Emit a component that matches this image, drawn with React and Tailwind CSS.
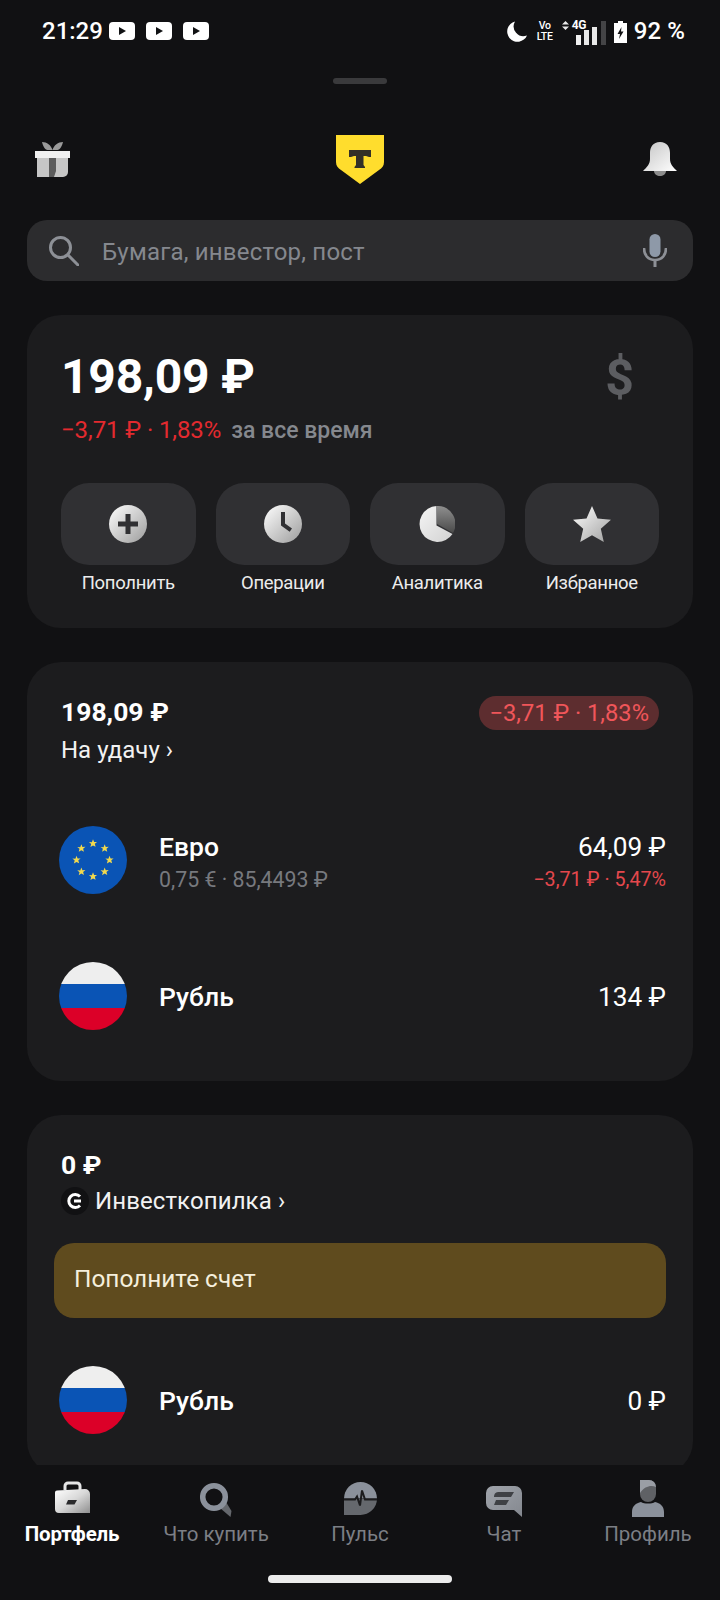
import React from "react";

const Gray = ({ id, a = "#ffffff", b = "#a8a8a8" }) => (
  <defs>
    <linearGradient id={id} x1="0" y1="0" x2="1" y2="1">
      <stop offset="0" stopColor={a} />
      <stop offset="1" stopColor={b} />
    </linearGradient>
  </defs>
);

const Yt = () => (
  <svg width="26" height="18" viewBox="0 0 26 18">
    <rect width="26" height="18" rx="4" fill="#fff" />
    <path d="M10 5l7 4-7 4z" fill="#111214" />
  </svg>
);

const Flag = () => (
  <div className="w-[68px] h-[68px] rounded-full overflow-hidden flex flex-col shrink-0">
    <div className="h-[22px] bg-[#eeeeee]" />
    <div className="h-[24px] bg-[#0a54b5]" />
    <div className="h-[22px] bg-[#dc0028]" />
  </div>
);

const EuFlag = () => {
  const stars = Array.from({ length: 8 }, (_, i) => {
    const a = (i * Math.PI * 2) / 8;
    return [34 + Math.sin(a) * 16.5, 34 - Math.cos(a) * 16.5];
  });
  return (
    <svg width="68" height="68" viewBox="0 0 68 68" className="shrink-0">
      <circle cx="34" cy="34" r="34" fill="#0a54b5" />
      {stars.map(([x, y], i) => (
        <path
          key={i}
          transform={`translate(${x} ${y})`}
          d="M0-4.2l1.1 2.8 3-.2-2.3 1.9.8 3L0 1.9l-2.6 1.6.8-3-2.3-1.9 3 .2z"
          fill="#f2d94e"
        />
      ))}
    </svg>
  );
};

const Action = ({ label, children }) => (
  <div className="flex-1 flex flex-col items-center">
    <div className="w-full h-[82px] rounded-[28px] bg-[#303033] flex items-center justify-center">{children}</div>
    <div className="mt-[8px] text-[18.5px] leading-[21px] text-[#ececec] tracking-[-0.3px]">{label}</div>
  </div>
);

const NavItem = ({ label, active, children }) => (
  <div className="w-[144px] flex flex-col items-center">
    <div className="h-[37px] flex items-end justify-center">{children}</div>
    <div className={`mt-[5px] text-[20.5px] leading-[24px] ${active ? "font-bold text-white tracking-[-0.2px]" : "text-[#7c7f85]"}`}>{label}</div>
  </div>
);

const Row = ({ flag, name, sub, value, delta, className }) => (
  <div className={`flex items-center ${className}`}>
    {flag}
    <div className={`ml-[32px] flex-1 ${sub ? "pt-[6px]" : "pt-[2px]"}`}>
      <div className="text-[26.5px] leading-[30px] font-medium text-white">{name}</div>
      {sub && <div className="mt-[3px] text-[21.3px] leading-[29px] text-[#77797e]">{sub}</div>}
    </div>
    <div className={`text-right ${sub ? "pt-[6px]" : "pt-[2px]"}`}>
      <div className="text-[26.2px] leading-[30px] text-white">{value}</div>
      {delta && <div className="mt-[3px] text-[19.7px] leading-[29px] text-[#e5484d]">{delta}</div>}
    </div>
  </div>
);

export default function App() {
  return (
    <div className="w-[720px] h-[1600px] overflow-hidden flex flex-col bg-[#111113] font-['Roboto','Noto_Sans',sans-serif] text-white">
      <div className="flex-1 min-h-0 overflow-hidden">
        {/* status bar */}
        <div className="h-[62px] pl-[42px] pr-[35px] flex items-center">
          <span className="text-[24px] leading-[24px] font-medium">21:29</span>
          <div className="ml-[6px] flex gap-[11px]"><Yt /><Yt /><Yt /></div>
          <div className="ml-auto flex items-center">
            <svg width="20" height="21" viewBox="0 0 20 21"><path d="M8 .5A10.300 10.300 0 1 0 20 14.500 9.800 9.800 0 0 1 8 .5z" fill="#fff" /></svg>
            <div className="ml-[11px] w-[14px] flex flex-col items-center text-[10.5px] leading-[11px] font-medium tracking-[-0.3px]"><span>Vo</span><span>LTE</span></div>
            <div className="relative ml-[10px] w-[44px] h-[25px] mt-[2px]">
              <svg className="absolute left-0 top-0" width="44" height="25" viewBox="0 0 44 25">
                <path d="M3.500 1l3.500 3.500H0zM3.500 10L0 6.500h7z" fill="#e8e8e8" />
                <rect x="14" y="15" width="5" height="10" fill="#f0f0f0" />
                <rect x="22" y="10" width="5" height="15" fill="#e8e8e8" />
                <rect x="30" y="7" width="5" height="18" fill="#e8e8e8" />
                <rect x="39" y="1" width="5" height="24" fill="#444446" />
              </svg>
              <span className="absolute left-[10px] -top-[1px] text-[12px] leading-[12px] font-bold tracking-[-0.4px]">4G</span>
            </div>
            <svg className="ml-[8px] mt-[1px]" width="13" height="22" viewBox="0 0 13 22">
              <path d="M4 0h5v2h4v20H0V2h4z" fill="#fff" />
              <path d="M7.500 6L3.500 13h2.500L5 18l4.500-7.500H7z" fill="#111113" />
            </svg>
            <span className="ml-[7px] text-[24px] leading-[24px] font-medium tracking-[0.1px]">92 %</span>
          </div>
        </div>
        {/* handle */}
        <div className="mt-[16px] mx-auto w-[54px] h-[6px] rounded-full bg-[#3a3a3c]" />
        {/* header */}
        <div className="mt-[51px] h-[48px] pl-[35px] pr-[43px] flex items-center">
          <svg width="35" height="35" viewBox="0 0 35 35">
            <path d="M7 0c5 0 9 3 10.500 8h-5C10 8 8 4 7 0zM28 0c-5 0-9 3-10.500 8h5C25 8 27 4 28 0z" fill="#9a9a9a" />
            <rect x="0" y="9" width="35" height="7" fill="#f0f0f0" />
            <path d="M2 16h31v14a5 5 0 0 1-5 5H2z" fill="#c6c6c6" />
            <path d="M14 16h7v13l-2 6h-5z" fill="#5c5c5c" />
          </svg>
          <svg className="ml-[266px]" width="48" height="49" viewBox="0 0 48 49">
            <path d="M0 0h48v27c0 4-2 6-5 8L24 49 5 35c-3-2-5-4-5-8z" fill="#ffdd2d" />
            <path d="M13 15h22v7h-2l-3-1h-2.500v9l1.500 2v1h-10.500v-1l1.500-2v-9H18l-3 1h-2z" fill="#333027" />
          </svg>
          <svg className="ml-auto" width="34" height="34" viewBox="0 0 34 34">
            <defs>
              <linearGradient id="bell" x1="0" y1="0" x2="1" y2="1">
                <stop offset="0" stopColor="#c4c4c4" />
                <stop offset="1" stopColor="#ffffff" />
              </linearGradient>
            </defs>
            <path d="M17 0c7 0 10 5 10 11v6c0 5 3 8 7 12H0c4-4 7-7 7-12v-6C7 5 10 0 17 0z" fill="url(#bell)" />
            <path d="M11 29h12c0 3-3 5-6 5s-6-2-6-5z" fill="#8d8d8d" />
          </svg>
        </div>
        {/* search */}
        <div className="mt-[37px] mx-[27px] h-[61px] rounded-[20px] bg-[#2c2c2e] flex items-center pl-[22px] pr-[26px]">
          <svg width="30" height="30" viewBox="0 0 30 30" fill="none" stroke="#8d9096" strokeWidth="3">
            <circle cx="11.500" cy="11.500" r="10" />
            <path d="M19 19l10 10" strokeLinecap="round" />
          </svg>
          <span className="ml-[23px] pt-[2px] text-[24px] leading-[30px] text-[#85888e] tracking-[0.2px]">Бумага, инвестор, пост</span>
          <svg className="ml-auto" width="24" height="33" viewBox="0 0 24 33">
            <rect x="6.500" y="0" width="11" height="23" rx="5.500" fill="#8e99a8" />
            <path d="M1 14c0 7 4 12 11 12s11-5 11-12" fill="none" stroke="#8d9096" strokeWidth="2.600" />
            <rect x="10.500" y="25" width="3" height="8" fill="#8d9096" />
          </svg>
        </div>
        {/* total card */}
        <div className="mt-[34px] mx-[27px] h-[313px] rounded-[34px] bg-[#1c1c1e] pt-[32px] px-[34px]">
          <div className="flex items-center justify-between pr-[25px]">
            <div className="text-[48px] leading-[58px] font-bold tracking-[-0.2px]">198,09 ₽</div>
            <div className="mt-[2px] text-[50px] leading-[58px] font-bold text-[#5c5d61]">$</div>
          </div>
          <div className="mt-[9px] flex items-baseline leading-[28px]">
            <span className="text-[24px] text-[#e32a2f] tracking-[-0.1px]">−3,71 ₽ · 1,83%</span>
            <span className="ml-[10px] text-[23px] text-[#85888e] font-medium">за все время</span>
          </div>
          <div className="mt-[38px] flex gap-[20px]">
            <Action label="Пополнить">
              <svg width="38" height="38" viewBox="0 0 38 38">
                <Gray id="g1" a="#ffffff" b="#9c9c9c" />
                <circle cx="19" cy="19" r="19" fill="url(#g1)" />
                <path d="M16.500 9h5v7.500H29v5h-7.500V29h-5v-7.500H9v-5h7.500z" fill="#303033" />
              </svg>
            </Action>
            <Action label="Операции">
              <svg width="38" height="38" viewBox="0 0 38 38">
                <Gray id="g2" a="#ffffff" b="#9c9c9c" />
                <circle cx="19" cy="19" r="19" fill="url(#g2)" />
                <path d="M17 7h4v11.500l7 5-2.300 3.200-8.700-6.200z" fill="#303033" />
              </svg>
            </Action>
            <Action label="Аналитика">
              <svg width="36" height="36" viewBox="0 0 36 36">
                <defs>
                  <linearGradient id="g3b" x1="0" y1="0" x2="0" y2="1">
                    <stop offset="0" stopColor="#8f8f8f" />
                    <stop offset="1" stopColor="#4a4a4a" />
                  </linearGradient>
                </defs>
                <Gray id="g3" a="#f5f5f5" b="#d2d2d2" />
                <path d="M18 0a18 18 0 0 1 16 27L18 18z" fill="url(#g3b)" />
                <path d="M17.500 0v19.500l16 8.500A18 18 0 1 1 17.500 0z" fill="url(#g3)" />
              </svg>
            </Action>
            <Action label="Избранное">
              <svg width="38" height="36" viewBox="0 0 38 36">
                <Gray id="g4" a="#ffffff" b="#a0a0a0" />
                <path d="M19 0l5.500 12.400L38 13.700l-10.200 9L30.800 36 19 29.200 7.200 36l3-13.300-10.200-9 13.500-1.300z" fill="url(#g4)" />
              </svg>
            </Action>
          </div>
        </div>
        {/* account card */}
        <div className="mt-[34px] mx-[27px] h-[419px] rounded-[34px] bg-[#1c1c1e] pt-[33px] pl-[34px] pr-[27px]">
          <div className="flex items-start justify-between">
            <div>
              <div className="text-[26.5px] leading-[34px] font-bold">198,09 ₽</div>
              <div className="mt-[5px] text-[24px] leading-[32px] text-[#f2f2f2]">На удачу ›</div>
            </div>
            <div className="mr-[7px] mt-[1px] h-[34px] px-[10px] rounded-full bg-[#5d2d2f] flex items-center text-[23.7px] leading-[34px] text-[#f0565a]">−3,71 ₽ · 1,83%</div>
          </div>
          <Row className="mt-[60px] -ml-[2px]" flag={<EuFlag />} name="Евро" sub="0,75 € · 85,4493 ₽" value="64,09 ₽" delta="−3,71 ₽ · 5,47%" />
          <Row className="mt-[68px] -ml-[2px]" flag={<Flag />} name="Рубль" value="134 ₽" />
        </div>
        {/* piggy card */}
        <div className="mt-[34px] mx-[27px] h-[360px] rounded-[34px] bg-[#1c1c1e] pt-[33px] pl-[34px] pr-[27px]">
          <div className="text-[26.5px] leading-[34px] font-bold">0 ₽</div>
          <div className="mt-[3px] flex items-center">
            <svg width="28" height="28" viewBox="0 0 28 28">
              <circle cx="14" cy="14" r="14" fill="#111113" />
              <path d="M19 9.500A6.500 6.500 0 1 0 19 18.500" fill="none" stroke="#fff" strokeWidth="3" />
              <path d="M13 14h7" stroke="#fff" strokeWidth="3" />
            </svg>
            <span className="ml-[6px] text-[24px] leading-[32px] text-[#f2f2f2] tracking-[0.1px]">Инвесткопилка ›</span>
          </div>
          <div className="mt-[26px] -ml-[7px] h-[75px] rounded-[20px] bg-[#5f4b1e] flex items-center pl-[20px] pb-[2px] text-[24.4px] text-[#f5efdc]">Пополните счет</div>
          <Row className="mt-[48px] -ml-[2px]" flag={<Flag />} name="Рубль" value="0 ₽" />
        </div>
      </div>
      {/* bottom nav */}
      <div className="h-[135px] shrink-0 bg-[#111113] flex flex-col">
        <div className="mt-[15px] flex">
          <NavItem label="Портфель" active>
            <svg width="35" height="37" viewBox="0 0 35 37">
              <defs>
                <linearGradient id="n1" x1="0" y1="0" x2="1" y2="1">
                  <stop offset="0" stopColor="#ffffff" />
                  <stop offset="0.5" stopColor="#d8d8d8" />
                  <stop offset="1" stopColor="#8f8f8f" />
                </linearGradient>
              </defs>
              <path d="M10 10V6a3 3 0 0 1 3-3h9a3 3 0 0 1 3 3v4" fill="none" stroke="#e6e6e6" strokeWidth="3" />
              <path d="M2 10.500L30 9a5 5 0 0 1 5 5v19H4a4 4 0 0 1-4-4V12.500a2 2 0 0 1 2-2z" fill="url(#n1)" />
              <path d="M13 20h9l-2.500 4.500H11z" fill="#2a2a2c" />
            </svg>
          </NavItem>
          <NavItem label="Что купить">
            <svg width="32" height="37" viewBox="0 0 32 37">
              <path d="M20 28l6-6 5.500 9-1 6z" fill="#65686d" />
              <circle cx="14" cy="17" r="11.300" fill="none" stroke="#8b919b" strokeWidth="5.500" />
            </svg>
          </NavItem>
          <NavItem label="Пульс">
            <svg width="33" height="37" viewBox="0 0 33 37">
              <path d="M0 18.500A16.500 16.500 0 0 1 33 18.500z" fill="#8b919b" />
              <path d="M0 19h33A16.500 16.500 0 0 1 16.500 35H0z" fill="#65686d" />
              <path d="M0 19.500h11l2-3 3 9 2-15 3 9h12" fill="none" stroke="#1c1c1e" strokeWidth="2" />
            </svg>
          </NavItem>
          <NavItem label="Чат">
            <svg width="36" height="37" viewBox="0 0 36 37">
              <Gray id="n4" a="#a0a4ab" b="#84888f" />
              <path d="M7 6h22a7 7 0 0 1 7 7v24l-8-7H7a7 7 0 0 1-7-7V13a7 7 0 0 1 7-7z" fill="url(#n4)" />
              <path d="M12 12h16l-3 5H8a5 5 0 0 1 4-5zM10 20h13l-3 5H8z" fill="#3f4145" />
            </svg>
          </NavItem>
          <NavItem label="Профиль">
            <svg width="32" height="37" viewBox="0 0 32 37">
              <path d="M8 0h9a7 7 0 0 1 7 7v7a8 8 0 0 1-16 0z" fill="#5f6165" />
              <path d="M8 0h9a7 7 0 0 1 7 7c-5-2-11-1-16 6z" fill="#9a9ea5" />
              <path d="M9 22c3 2 11 2 14 0 5 1 9 4 9 10v5H0v-5c0-6 4-9 9-10z" fill="#8b919b" />
            </svg>
          </NavItem>
        </div>
        <div className="mt-auto mb-[17px] mx-auto w-[184px] h-[8px] rounded-full bg-[#ececec]" />
      </div>
    </div>
  );
}
